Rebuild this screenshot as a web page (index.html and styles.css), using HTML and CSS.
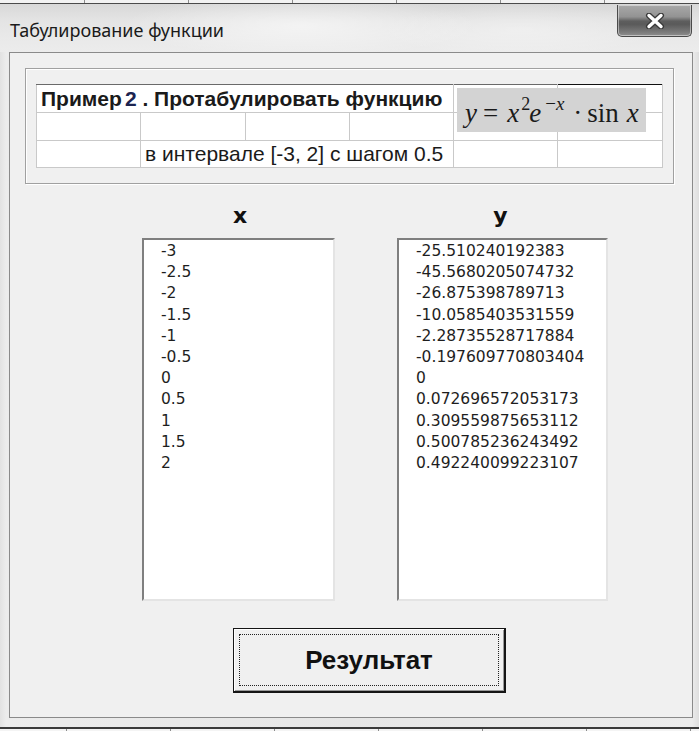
FILE: index.html
```html
<!DOCTYPE html>
<html lang="ru">
<head>
<meta charset="utf-8">
<title>Табулирование функции</title>
<link rel="stylesheet" href="styles.css">
</head>
<body>
<div class="screen">
  <div class="desk-top"></div>
  <div class="window">
    <div class="titlebar">
      <span class="title">Табулирование функции</span>
      <div class="close" aria-label="Закрыть">
        <svg width="20" height="16" viewBox="0 0 20 16">
          <path d="M4 2.5 L16 13.5 M16 2.5 L4 13.5" stroke="#3a3a3a" stroke-width="6" stroke-linecap="round"/>
          <path d="M4 2.5 L16 13.5 M16 2.5 L4 13.5" stroke="#ffffff" stroke-width="3.4" stroke-linecap="round"/>
        </svg>
      </div>
    </div>
    <div class="frame">
      <div class="client">
        <div class="group">
          <div class="sheet">
            <table class="grid">
              <colgroup>
                <col class="c104"><col class="c105"><col class="c104"><col class="c104"><col class="c104"><col class="c105">
              </colgroup>
              <tr class="head">
                <td colspan="4" class="task">Пример<span class="num">2</span> . Протабулировать функцию</td>
                <td></td>
                <td class="edge"></td>
              </tr>
              <tr>
                <td></td><td></td><td></td><td></td><td></td><td></td>
              </tr>
              <tr>
                <td></td>
                <td colspan="3">в интервале [-3, 2] с шагом 0.5</td>
                <td></td>
                <td></td>
              </tr>
            </table>
            <div class="formula"><i>y</i><span class="eq">=</span><i class="x1">x</i><sup class="p2">2</sup><i class="ee">e</i><sup class="pm">−<i>x</i></sup><span class="dot">·</span><span class="sin">sin</span><i class="x2">x</i></div>
          </div>
        </div>

        <div class="lists">
          <div class="col col-x">
            <div class="label">x</div>
            <div class="listbox">
              <div>-3</div>
              <div>-2.5</div>
              <div>-2</div>
              <div>-1.5</div>
              <div>-1</div>
              <div>-0.5</div>
              <div>0</div>
              <div>0.5</div>
              <div>1</div>
              <div>1.5</div>
              <div>2</div>
            </div>
          </div>
          <div class="col col-y">
            <div class="label">y</div>
            <div class="listbox">
              <div>-25.510240192383</div>
              <div>-45.5680205074732</div>
              <div>-26.875398789713</div>
              <div>-10.0585403531559</div>
              <div>-2.28735528717884</div>
              <div>-0.197609770803404</div>
              <div>0</div>
              <div>0.072696572053173</div>
              <div>0.309559875653112</div>
              <div>0.500785236243492</div>
              <div>0.492240099223107</div>
            </div>
          </div>
        </div>

        <div class="actions">
          <button class="run" type="button"><span class="focus">Результат</span></button>
        </div>
      </div>
    </div>
  </div>
  <div class="desk-bottom"></div>
</div>
</body>
</html>
```

FILE: styles.css
```css
* { box-sizing: border-box; }

html, body {
  margin: 0;
  padding: 0;
}

body {
  width: 699px;
  height: 731px;
  overflow: hidden;
  background: #ffffff;
  font-family: "DejaVu Sans", sans-serif;
  color: #111;
}

.screen {
  display: flex;
  flex-direction: column;
  height: 731px;
}

/* spreadsheet grid peeking out behind the window */
.desk-top {
  height: 4px;
  border-bottom: 1px solid #4a4a4a;
  background:
    repeating-linear-gradient(90deg, transparent 0 84px, #8c8c8c 84px 85px, transparent 85px 104px),
    #f2f2f2;
}

.desk-bottom {
  height: 2px;
  background:
    repeating-linear-gradient(90deg, transparent 0 66px, #8c8c8c 66px 67px, transparent 67px 104px),
    #f4f4f4;
}

/* window chrome */
.window {
  height: 725px;
  display: flex;
  flex-direction: column;
  background: linear-gradient(90deg, #e2e2e2 0, #ececec 6px, #e6e6e6 50%, #ececec 99%, #dedede 100%);
  border-bottom: 2px solid #3a3a3a;
}

.titlebar {
  height: 48px;
  display: flex;
  align-items: flex-start;
  padding-left: 10px;
  background:
    radial-gradient(ellipse 180px 30px at 300px 22px, rgba(255,255,255,0.55), rgba(255,255,255,0) 100%),
    radial-gradient(ellipse 140px 26px at 520px 26px, rgba(255,255,255,0.35), rgba(255,255,255,0) 100%),
    linear-gradient(180deg, #d8d8d8 0, #e4e4e4 35%, #e9e9e9 70%, #ececec 100%);
}

.title {
  margin-top: 15px;
  font-family: "Noto Sans", "DejaVu Sans", sans-serif;
  font-size: 18px;
  line-height: 22px;
  color: #1a1a1a;
}

.close {
  margin-left: auto;
  margin-right: 7px;
  margin-top: 1px;
  width: 75px;
  height: 32px;
  display: flex;
  align-items: center;
  justify-content: center;
  border: 1px solid #4a4a4a;
  border-top: none;
  border-radius: 0 0 5px 5px;
  box-shadow: inset 0 0 0 1px rgba(255,255,255,0.45);
  background: linear-gradient(180deg, #a9a9a9 0, #939393 38%, #5e5e5e 52%, #5a5a5a 62%, #777 85%, #8e8e8e 100%);
}

.close svg { display: block; margin-top: 1px; }

.frame {
  flex: 1;
  display: flex;
  padding: 0 6px 9px 9px;
}

.client {
  flex: 1;
  display: flex;
  flex-direction: column;
  border: 1px solid #8a8a8a;
  background: #f0f0f0;
}

/* group box with the embedded sheet */
.group {
  margin: 15px 18px 0 15px;
  padding: 15px 11px 15px 10px;
  border: 1px solid #a0a0a0;
  box-shadow: inset 1px 1px 0 #fff, 1px 1px 0 #fff;
}

.sheet {
  position: relative;
  width: 626px;
}

.grid {
  width: 626px;
  table-layout: fixed;
  border-collapse: collapse;
  background: #fff;
  font-family: "Liberation Sans", Arial, sans-serif;
  font-size: 21px;
  color: #1a1a1a;
}

.c104 { width: 104px; }
.c105 { width: 105px; }

.grid td {
  height: 28px;
  padding: 0 0 0 4px;
  line-height: 24px;
  border: 1px solid #c9c9c9;
  white-space: nowrap;
  overflow: visible;
}

.grid tr:last-child td { height: 27px; }

.grid .head td { border-top-color: #6a6a6a; }
.grid .head td.edge { border-top-color: #111; }

.task {
  font-weight: bold;
  padding-top: 2px;
}

.task .num {
  margin-left: 3px;
  color: #1c2450;
}

.formula {
  position: absolute;
  left: 421px;
  top: 4px;
  width: 189px;
  height: 44px;
  padding: 7px 0 0 8px;
  background: #d3d3d3;
  font-family: "Liberation Serif", "Times New Roman", serif;
  font-size: 27px;
  line-height: 36px;
  color: #1a1a1a;
  white-space: nowrap;
}

.formula sup {
  font-size: 18px;
  line-height: 0;
  vertical-align: 12px;
}

.formula .eq { margin: 0 9px 0 6px; }
.formula .p2 { margin-left: 2px; }
.formula .ee { margin-left: -1px; }
.formula .pm { margin-left: 4px; font-size: 19px; }
.formula .dot { margin: 0 5px 0 9px; }
.formula .x2 { margin-left: 8px; }

/* the two result columns */
.lists {
  display: flex;
  margin-top: 19px;
  padding-left: 132px;
  gap: 62px;
}

.col { display: flex; flex-direction: column; }
.col-x { width: 193px; }
.col-y { width: 211px; }

.label {
  height: 26px;
  margin-bottom: 9px;
  text-align: center;
  font-family: "DejaVu Sans", sans-serif;
  font-weight: bold;
  font-size: 22px;
  line-height: 26px;
  color: #111;
}

.col-x .label { padding-left: 3px; }
.col-y .label { padding-right: 4px; }

.listbox {
  height: 363px;
  padding: 1px 0 0 17px;
  background: #fff;
  border: 2px solid;
  border-color: #7f7f7f #e4e4e4 #e4e4e4 #7f7f7f;
  font-family: "DejaVu Sans", sans-serif;
  font-size: 15.5px;
  line-height: 21.2px;
  color: #1e1e1e;
}

/* command button */
.actions {
  margin-top: 27px;
  padding-left: 223px;
}

.run {
  width: 273px;
  height: 65px;
  margin: 0;
  padding: 5px;
  display: flex;
  background: #f0f0f0;
  border: 1px solid #151515;
  border-right-width: 2px;
  border-bottom-width: 2px;
  box-shadow: inset 1px 1px 0 #fff, inset -1px -1px 0 #9a9a9a;
  font-family: "Liberation Sans", Arial, sans-serif;
}

.focus {
  flex: 1;
  display: flex;
  align-items: center;
  justify-content: center;
  border: 1px dotted #222;
  font-weight: bold;
  font-size: 26px;
  color: #111;
}
```
